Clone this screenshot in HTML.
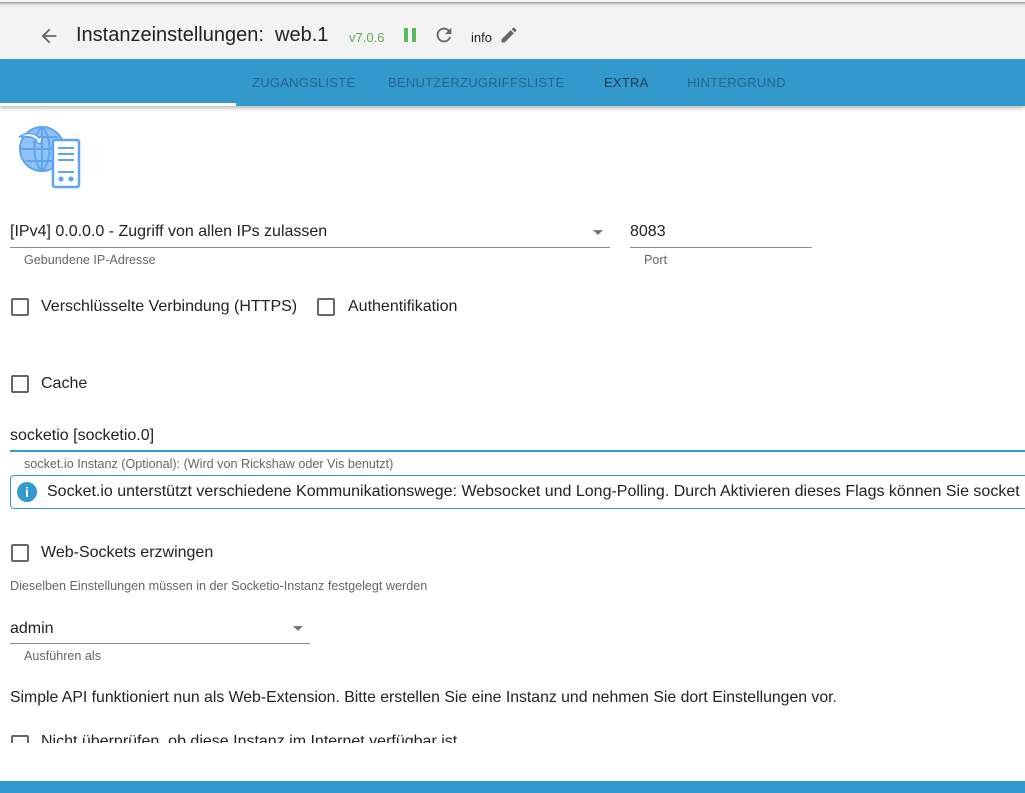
<!DOCTYPE html>
<html><head><meta charset="utf-8"><style>
*{box-sizing:border-box;margin:0;padding:0}
body{width:1025px;height:793px;overflow:hidden;background:#fff;font-family:"Liberation Sans",Roboto,sans-serif;color:#222;position:relative}
.abs{position:absolute;white-space:nowrap}
.top{position:absolute;left:0;top:0;width:1025px;height:59px;background:#f3f3f3}
.topline{position:absolute;left:0;top:2px;width:1025px;height:5px;background:linear-gradient(#9a9a9a,#dedede,#f3f3f3)}
.tabs{position:absolute;left:0;top:59px;width:1025px;height:47px;background:#3399cc;box-shadow:0 2px 4px rgba(0,0,0,.3)}
.tab{position:absolute;top:16px;font-size:13px;color:#28648a;letter-spacing:.25px}
.ul{position:absolute;left:0;top:44px;width:236px;height:3px;background:#fff}
.line{position:absolute;height:1px;background:#8a8a8a}
.small{font-size:12.6px;color:#666}
.cb{position:absolute;width:18px;height:18px;border:2px solid #666;border-radius:2px}
.lbl{font-size:16px;color:#222}
.tri{position:absolute;width:0;height:0;border-left:5px solid transparent;border-right:5px solid transparent;border-top:5px solid #777}
</style></head><body>
<div class="top"></div><div class="topline"></div>
<svg class="abs" style="left:38px;top:25px" width="22" height="22" viewBox="0 0 24 24"><path d="M20 11H7.83l5.59-5.59L12 4l-8 8 8 8 1.41-1.41L7.83 13H20v-2z" fill="#666"/></svg>
<div class="abs" style="left:76px;top:24px;font-size:20px;color:#222">Instanzeinstellungen:&nbsp; web.1</div>
<div class="abs" style="left:349px;top:30px;font-size:13px;color:#5cab5c">v7.0.6</div>
<div class="abs" style="left:404px;top:28px;width:4px;height:14px;background:#5cb85c"></div>
<div class="abs" style="left:412px;top:28px;width:4px;height:14px;background:#5cb85c"></div>
<svg class="abs" style="left:433px;top:24px" width="22" height="22" viewBox="0 0 24 24"><path d="M17.65 6.35A7.958 7.958 0 0012 4c-4.42 0-7.99 3.58-7.99 8s3.57 8 7.99 8c3.73 0 6.84-2.55 7.73-6h-2.08A5.99 5.99 0 0112 18c-3.31 0-6-2.69-6-6s2.69-6 6-6c1.66 0 3.14.69 4.22 1.78L13 11h7V4l-2.35 2.35z" fill="#666"/></svg>
<div class="abs" style="left:471px;top:30px;font-size:13px;color:#222">info</div>
<svg class="abs" style="left:499px;top:25px" width="20" height="20" viewBox="0 0 24 24"><path d="M3 17.25V21h3.75L17.81 9.94l-3.75-3.75L3 17.25zM20.71 7.04a1 1 0 000-1.41l-2.34-2.34a1 1 0 00-1.41 0l-1.83 1.83 3.75 3.75 1.83-1.83z" fill="#666"/></svg>
<div class="tabs">
<div class="tab" style="left:252px">ZUGANGSLISTE</div>
<div class="tab" style="left:388px">BENUTZERZUGRIFFSLISTE</div>
<div class="tab" style="left:604px;color:#1d3a50">EXTRA</div>
<div class="tab" style="left:687px">HINTERGRUND</div>
<div class="ul"></div>
</div>
<svg class="abs" style="left:18px;top:125px" width="64" height="64" viewBox="0 0 64 64">
<circle cx="24" cy="24" r="22" fill="#90c2f5" stroke="#5ea4f0" stroke-width="2"/>
<path d="M2 24h44M24 2v44M8 12h32M8 36h32M24 2c-10 8-10 36 0 44M24 2c10 8 10 36 0 44" stroke="#5ea4f0" stroke-width="2" fill="none"/>
<path d="M1 12c7-5 15-5 20 1l3-2-1 8-7-2 3-1c-4-5-11-5-18-4z" fill="#fff" stroke="#5ea4f0" stroke-width="1.5"/>
<rect x="35" y="15" width="26" height="47" rx="2" fill="#fff" stroke="#5ea4f0" stroke-width="2.5"/>
<path d="M40 23h16M40 29h16M40 35h16M40 47h16" stroke="#5ea4f0" stroke-width="2"/>
<circle cx="43" cy="54" r="2.5" fill="#5ea4f0"/><circle cx="53" cy="54" r="2.5" fill="#5ea4f0"/>
</svg>
<div class="abs lbl" style="left:10px;top:223px">[IPv4] 0.0.0.0 - Zugriff von allen IPs zulassen</div>
<div class="tri" style="left:593px;top:230px"></div>
<div class="line" style="left:10px;top:247px;width:600px"></div>
<div class="abs small" style="left:24px;top:253px">Gebundene IP-Adresse</div>
<div class="abs lbl" style="left:630px;top:223px">8083</div>
<div class="line" style="left:630px;top:247px;width:182px"></div>
<div class="abs small" style="left:644px;top:253px">Port</div>
<div class="cb" style="left:11px;top:298px"></div>
<div class="abs lbl" style="left:41px;top:298px">Verschlüsselte Verbindung (HTTPS)</div>
<div class="cb" style="left:317px;top:298px"></div>
<div class="abs lbl" style="left:348px;top:298px">Authentifikation</div>
<div class="cb" style="left:11px;top:375px"></div>
<div class="abs lbl" style="left:41px;top:375px">Cache</div>
<div class="abs lbl" style="left:10px;top:427px">socketio [socketio.0]</div>
<div class="abs" style="left:10px;top:450px;width:1015px;height:2px;background:#3399cc"></div>
<div class="abs small" style="left:24px;top:457px">socket.io Instanz (Optional): (Wird von Rickshaw oder Vis benutzt)</div>
<div class="abs" style="left:10px;top:475px;width:1030px;height:34px;border:1px solid #3399cc;border-radius:4px"></div>
<div class="abs" style="left:17px;top:482px;width:20px;height:20px;border-radius:50%;background:#3399cc;color:#fff;font-size:14px;font-weight:bold;text-align:center;line-height:20px">i</div>
<div class="abs lbl" style="left:47px;top:483px">Socket.io unterstützt verschiedene Kommunikationswege: Websocket und Long-Polling. Durch Aktivieren dieses Flags können Sie socket</div>
<div class="cb" style="left:11px;top:544px"></div>
<div class="abs lbl" style="left:41px;top:544px">Web-Sockets erzwingen</div>
<div class="abs small" style="left:10px;top:579px">Dieselben Einstellungen müssen in der Socketio-Instanz festgelegt werden</div>
<div class="abs lbl" style="left:10px;top:620px">admin</div>
<div class="tri" style="left:293px;top:626px"></div>
<div class="line" style="left:10px;top:643px;width:300px"></div>
<div class="abs small" style="left:24px;top:649px">Ausführen als</div>
<div class="abs lbl" style="left:10px;top:689px;font-size:15.8px">Simple API funktioniert nun als Web-Extension. Bitte erstellen Sie eine Instanz und nehmen Sie dort Einstellungen vor.</div>
<div class="abs" style="left:0;top:733px;width:1025px;height:10px;overflow:hidden">
<div class="cb" style="left:11px;top:2px"></div>
<div class="abs lbl" style="left:41px;top:0px">Nicht überprüfen, ob diese Instanz im Internet verfügbar ist</div>
</div>
<div class="abs" style="left:0;top:781px;width:1025px;height:12px;background:#3399cc"></div>
</body></html>
